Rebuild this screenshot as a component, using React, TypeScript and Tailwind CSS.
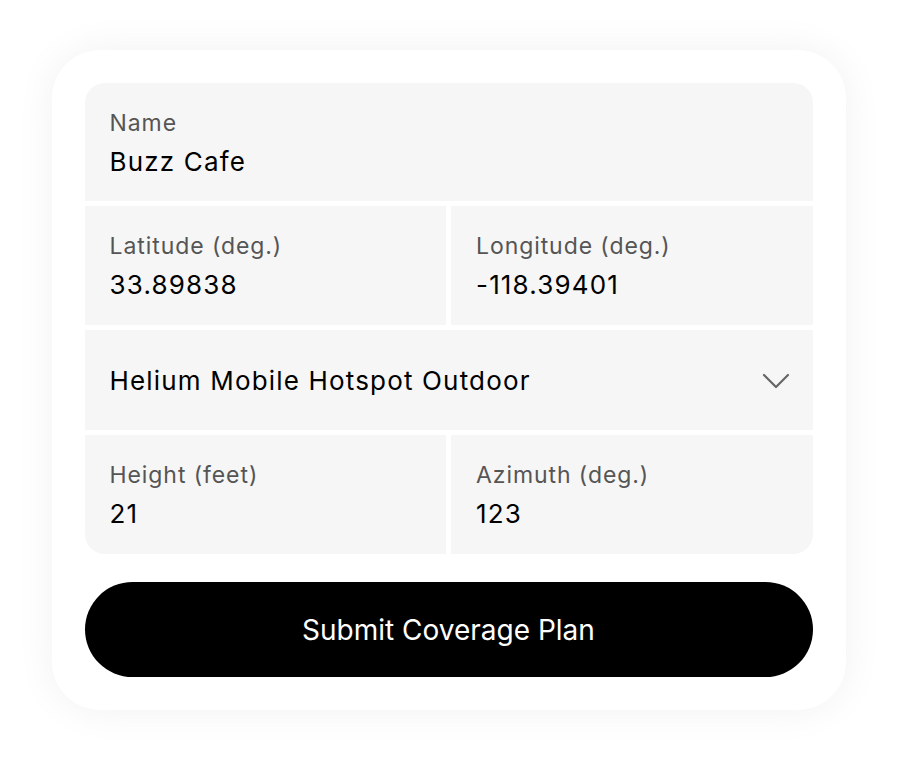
interface FieldProps {
  label: string
  value: string
  className?: string
}

function Field({ label, value, className = '' }: FieldProps) {
  return (
    <div className={`bg-[#f6f6f6] pl-[25px] pr-6 pt-[26px] ${className}`}>
      <div className="text-[23px] leading-[28px] tracking-[0.04em] text-[#555555]">{label}</div>
      <div className="mt-[8px] text-[26px] leading-[34px] tracking-[0.045em] text-black">{value}</div>
    </div>
  )
}

export default function App() {
  return (
    <div className="min-h-[760px] bg-white pt-[50px]" style={{ fontFamily: 'Inter, "Noto Sans", sans-serif' }}>
      <div className="mx-auto w-[794px] rounded-[48px] bg-white p-[33px] shadow-[0_0_40px_rgba(0,0,0,0.06)]">
        <div className="flex flex-col gap-[5px] overflow-hidden rounded-[20px]">
          <Field label="Name" value="Buzz Cafe" className="h-[118px]" />
          <div className="grid h-[119px] grid-cols-2 gap-[5px]">
            <Field label="Latitude (deg.)" value="33.89838" />
            <Field label="Longitude (deg.)" value="-118.39401" />
          </div>
          <button
            type="button"
            className="flex h-[100px] items-center justify-between bg-[#f6f6f6] pl-[25px] pr-[23px] pt-[1px] text-left"
          >
            <span className="text-[26px] leading-[34px] tracking-[0.045em] text-black">
              Helium Mobile Hotspot Outdoor
            </span>
            <svg width="28" height="16" viewBox="0 0 28 16" fill="none" className="text-[#666666]">
              <path d="M2 2 L14 14 L26 2" stroke="currentColor" strokeWidth="2.2" strokeLinecap="round" strokeLinejoin="round" />
            </svg>
          </button>
          <div className="grid h-[119px] grid-cols-2 gap-[5px]">
            <Field label="Height (feet)" value="21" />
            <Field label="Azimuth (deg.)" value="123" />
          </div>
        </div>
        <button
          type="button"
          className="mt-[28px] flex h-[95px] w-full items-center justify-center rounded-full bg-black text-[28px] text-white"
        >
          Submit Coverage Plan
        </button>
      </div>
    </div>
  )
}
